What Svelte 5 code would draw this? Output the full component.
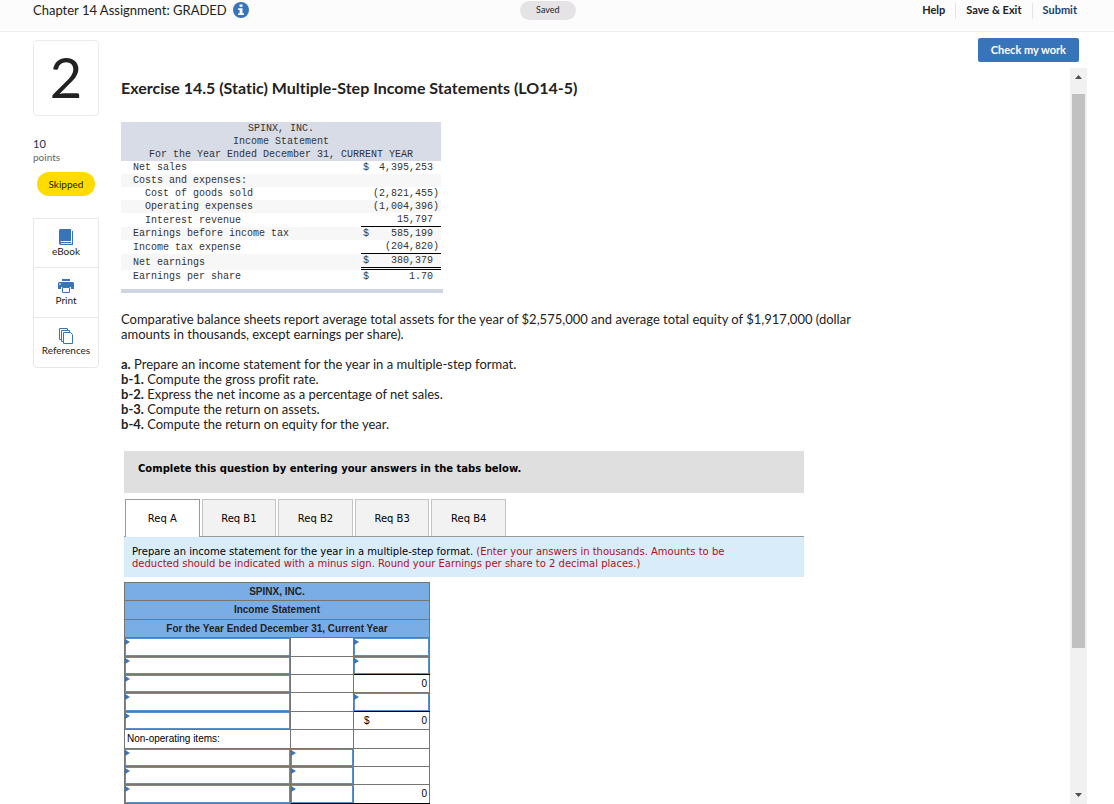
<script>
let tabs = ["Req A", "Req B1", "Req B2", "Req B3", "Req B4"]
let activeTab = $state(0)

let statement = [
    { label: "Net sales", sign: "$", amount: "4,395,253" },
    { label: "Costs and expenses:" },
    { label: "Cost of goods sold", indent: true, amount: "(2,821,455)" },
    { label: "Operating expenses", indent: true, amount: "(1,004,396)" },
    { label: "Interest revenue", indent: true, amount: "15,797", line: "single" },
    { label: "Earnings before income tax", sign: "$", amount: "585,199" },
    { label: "Income tax expense", amount: "(204,820)", line: "single" },
    { label: "Net earnings", sign: "$", amount: "380,379", line: "double" },
    { label: "Earnings per share", sign: "$", amount: "1.70" }
]

let requirements = [
    { id: "a.", text: "Prepare an income statement for the year in a multiple-step format." },
    { id: "b-1.", text: "Compute the gross profit rate." },
    { id: "b-2.", text: "Express the net income as a percentage of net sales." },
    { id: "b-3.", text: "Compute the return on assets." },
    { id: "b-4.", text: "Compute the return on equity for the year." }
]

// true = the cell can be filled in, a string = fixed text
let rows = [
    { name: true, mid: "", total: true },
    { name: true, mid: "", total: true, sum: true },
    { name: true, mid: "", total: "0" },
    { name: true, mid: "", total: true, sum: true },
    { name: true, mid: "", total: "0", sign: "$" },
    { name: "Non-operating items:", mid: "", total: "" },
    { name: true, mid: true, total: "" },
    { name: true, mid: true, total: "" },
    { name: true, mid: true, total: "0", sum: true }
]
</script>

{#snippet cell(value, label, extra, sign)}
    <td class={[extra, value === true && 'entry']}>
        {#if value === true}
            <input type="text" aria-label={label}>
        {:else if sign}
            <div class="money"><span>{sign}</span><span>{value}</span></div>
        {:else}
            {value}
        {/if}
    </td>
{/snippet}

<div class="page">
    <header>
        <div class="title">
            <span>Chapter 14 Assignment: GRADED</span>
            <button type="button" class="info" aria-label="Assignment information">
                <svg viewBox="0 0 16 16" width="16" height="16">
                    <circle cx="8" cy="8" r="8" fill="#3874ba" />
                    <path d="M6.5 2.5h3v2.3h-3zM5.2 6.2h4.3v5h1.4v1.8H5.2v-1.8h1.4V8H5.2z" fill="#fff" />
                </svg>
            </button>
        </div>
        <span class="saved">Saved</span>
        <nav>
            <a href="#help">Help</a>
            <a href="#exit">Save &amp; Exit</a>
            <a href="#submit" class="submit">Submit</a>
        </nav>
    </header>

    <div class="body">
        <aside>
            <div class="number">2</div>
            <div class="points"><span>10</span>points</div>
            <div class="skipped">Skipped</div>
            <div class="tools">
                <button type="button">
                    <svg viewBox="0 0 16 16" width="16" height="16">
                        <path d="M2.5 0H13v12H3.2v1H14V2h1v14H2.8C1.8 16 1 15.2 1 14V1.5C1 .7 1.7 0 2.5 0z" fill="#3874ba" />
                        <path d="M2.5 12.5H13M13.5 1v13.5H3" fill="none" stroke="#fff" stroke-width=".8" />
                    </svg>
                    eBook
                </button>
                <button type="button">
                    <svg viewBox="0 0 16 16" width="16" height="16">
                        <path d="M4 1h8v2H4zM1 4h14l1 1v6h-3V9H3v2H0V5z" fill="#3874ba" />
                        <path d="M4.5 9.5h7v5h-7z" fill="#fff" stroke="#3874ba" />
                        <path d="M1.3 5.3h1.4v1.4H1.3z" fill="#fff" />
                    </svg>
                    Print
                </button>
                <button type="button">
                    <svg viewBox="0 0 16 16" width="16" height="16" fill="#fff" stroke="#3874ba">
                        <path d="M1.5.5h8v11h-8z" />
                        <path d="M3.5 2.5h8v11h-8z" />
                        <path d="M5.5 4.5h7l2 2v9h-9z" />
                    </svg>
                    References
                </button>
            </div>
        </aside>

        <section>
            <button type="button" class="check">Check my work</button>
            <div class="scroller">
                <main>
                    <h1>Exercise 14.5 (Static) Multiple-Step Income Statements (LO14-5)</h1>

                    <div class="given">
                        <table>
                            <thead>
                                <tr><th colspan="3">SPINX, INC.</th></tr>
                                <tr><th colspan="3">Income Statement</th></tr>
                                <tr><th colspan="3">For the Year Ended December 31, CURRENT YEAR</th></tr>
                            </thead>
                            <tbody>
                                {#each statement as row}
                                <tr>
                                    <td class={['label', row.indent && 'indent']}>{row.label}</td>
                                    <td class={row.line}>{row.sign ?? ''}</td>
                                    <td class={['amount', row.line, row.amount?.endsWith(')') && 'negative']}>{row.amount ?? ''}</td>
                                </tr>
                                {/each}
                            </tbody>
                        </table>
                    </div>

                    <div class="question">
                        <p>Comparative balance sheets report average total assets for the year of $2,575,000 and average total equity of $1,917,000 (dollar amounts in thousands, except earnings per share).</p>
                        <ul>
                            {#each requirements as req}
                            <li><b>{req.id}</b> {req.text}</li>
                            {/each}
                        </ul>
                    </div>

                    <div class="answer">
                        <h2>Complete this question by entering your answers in the tabs below.</h2>
                        <div class="tabs">
                            <div class="tablist" role="tablist">
                                {#each tabs as tab, i}
                                <button type="button" role="tab" aria-selected={activeTab === i} class:active={activeTab === i} onclick={() => activeTab = i}>{tab}</button>
                                {/each}
                            </div>
                        </div>
                        <p class="hint">Prepare an income statement for the year in a multiple-step format. <em>(Enter your answers in thousands. Amounts to be deducted should be indicated with a minus sign. Round your Earnings per share to 2 decimal places.)</em></p>

                        <table class="sheet">
                            <colgroup><col class="wide"><col class="mid"><col></colgroup>
                            <tbody>
                                <tr><th colspan="3">SPINX, INC.</th></tr>
                                <tr><th colspan="3">Income Statement</th></tr>
                                <tr><th colspan="3">For the Year Ended December 31, Current Year</th></tr>
                                {#each rows as row, i}
                                <tr>
                                    {@render cell(row.name, `Item ${i + 1}`, '')}
                                    {@render cell(row.mid, `Amount ${i + 1}`, row.sum && row.mid && 'sum')}
                                    {@render cell(row.total, `Total ${i + 1}`, ['right', row.sum && 'sum'], row.sign)}
                                </tr>
                                {/each}
                            </tbody>
                        </table>
                    </div>
                </main>
                <div class="scrollbar">
                    <svg viewBox="0 0 7 4" width="7" height="4"><path d="M0 4 3.5 0 7 4z" fill="#505050" /></svg>
                    <div class="track"><div class="thumb"></div></div>
                    <svg viewBox="0 0 7 4" width="7" height="4"><path d="M0 0h7L3.5 4z" fill="#505050" /></svg>
                </div>
            </div>
        </section>
    </div>
</div>

<style>
:global(body) {
    background: #fff;
    color: #222;
    font-family: Lato, "Open Sans", sans-serif;
    font-size: 13px;
    font-variant-ligatures: none;
}

* {
    box-sizing: border-box;
}

button {
    font: inherit;
    color: inherit;
    cursor: pointer;
}

.page {
    display: flex;
    flex-direction: column;
    height: 100vh;
    overflow: hidden;
}

header {
    display: grid;
    grid-template-columns: 20fr auto 21fr;
    align-items: start;
    height: 32px;
    flex: none;
    padding: 0 27px 0 33px;
    background: #fcfcfc;
    border-bottom: 1px solid #efefef;
}

.title {
    display: flex;
    align-items: center;
    gap: 6px;
    height: 20px;
}

.info {
    display: flex;
    padding: 0;
    border: 0;
    background: none;
}

.saved {
    margin-top: 1px;
    padding: 0 16px 2px;
    border-radius: 10px;
    background: #e5e3e6;
    font-size: 9px;
    line-height: 17px;
}

nav {
    display: flex;
    justify-content: flex-end;
    padding-top: 3px;
    font-size: 11px;
    font-weight: bold;
    line-height: 14px;
}

nav a {
    padding: 0 10px 2px;
    color: #222;
    text-decoration: none;
}

nav a + a {
    border-left: 1px solid #e4e4e4;
}

nav .submit {
    color: #1b4173;
}

.body {
    display: flex;
    flex: 1;
    min-height: 0;
    padding: 0 27px 0 33px;
    gap: 22px;
}

aside {
    flex: none;
    width: 66px;
    padding-top: 8px;
}

.number {
    height: 76px;
    border: 1px solid #ebebeb;
    border-radius: 4px;
    font-size: 56px;
    line-height: 71px;
    text-align: center;
}

.points {
    display: flex;
    flex-direction: column;
    margin-top: 21px;
    color: #666;
    font-size: 10px;
    line-height: 12px;
}

.points span {
    color: #1b2f4d;
    font-size: 11px;
    line-height: 14px;
}

.skipped {
    width: 58px;
    margin: 9px auto 0;
    border-radius: 12px;
    background: #ffdb00;
    font-size: 10px;
    line-height: 24px;
    text-align: center;
}

.tools {
    display: flex;
    flex-direction: column;
    margin-top: 22px;
    border: 1px solid #e8e8e8;
    border-radius: 0 0 4px 4px;
}

.tools button {
    display: flex;
    flex-direction: column;
    align-items: center;
    height: 48px;
    padding: 10px 0 0;
    border: 0;
    background: none;
    font-size: 10px;
    line-height: 12px;
}

.tools button + button {
    height: 50px;
    border-top: 1px solid #e8e8e8;
}

section {
    display: flex;
    flex: 1;
    flex-direction: column;
    min-width: 0;
    padding-top: 6px;
}

.check {
    align-self: flex-end;
    height: 24px;
    margin-right: 8px;
    padding: 0 13px 2px;
    border: 0;
    border-radius: 2px;
    background: #3874ba;
    color: #fff;
    font-size: 11px;
    font-weight: bold;
    white-space: nowrap;
}

.scroller {
    display: flex;
    flex: 1;
    justify-content: space-between;
    min-height: 0;
    margin-top: 6px;
}

main {
    max-width: 750px;
    padding-top: 10px;
}

h1 {
    margin: 0 0 24px;
    font-size: 16px;
    line-height: 20px;
}

.scrollbar {
    display: flex;
    flex: none;
    flex-direction: column;
    align-items: center;
    gap: 7px;
    width: 17px;
    padding: 7px 0;
    background: #f1f1f1;
}

.track {
    flex: 1;
    width: 13px;
    padding-top: 8px;
}

.thumb {
    height: 80%;
    background: #c1c1c1;
}

.given {
    width: 322px;
    padding-bottom: 6px;
    border-bottom: 4px solid #d0d5e2;
}

.given table {
    width: 320px;
    border-spacing: 0;
    color: #333;
    font-family: "Liberation Mono", monospace;
    font-size: 10px;
    line-height: 13px;
}

.given th {
    padding: 0;
    background: #d8dce7;
    font-weight: normal;
}

.given td {
    padding: 0 2px;
}

.given tbody tr:nth-child(even) td {
    background: #f7f7f7;
}

.given .label {
    width: 241px;
    padding-left: 12px;
}

.given .indent {
    padding-left: 24px;
}

.given .amount {
    padding-right: 8px;
    text-align: right;
}

.given .negative {
    padding-right: 2px;
}

.single {
    border-bottom: 1px solid #000;
}

.double {
    border-bottom: 3px double #000;
}

.question {
    margin-top: 19px;
    line-height: 15px;
}

.question p {
    margin: 0 0 15px;
}

ul {
    margin: 0;
    padding: 0;
    list-style: none;
}

.answer {
    width: 680px;
    margin: 19px 0 0 3px;
    color: #000;
    font-family: "DejaVu Sans", sans-serif;
    font-size: 10px;
    line-height: 12px;
}

h2 {
    margin: 0 0 6px;
    padding: 12px 14px 18px;
    background: #dfdfdf;
    font-size: 10px;
}

.tabs {
    padding-left: 1px;
    border-bottom: 1px solid #999;
}

.tablist {
    display: grid;
    grid-template-columns: repeat(5, 1fr);
    gap: 2px;
    width: 381px;
}

.tabs button {
    height: 37px;
    padding: 1px 0 0;
    border: 1px solid #c4c4c4;
    border-bottom: 0;
    background: #f2f2f2;
}

.tabs .active {
    margin-bottom: -1px;
    height: 38px;
    border-color: #999;
    background: #fff;
}

.hint {
    margin: 0 0 5px;
    padding: 9px 40px 7px 8px;
    background: #d9ecfa;
}

em {
    color: #b0101c;
    font-style: normal;
}

.sheet {
    width: 306px;
    height: 222px;
    border-collapse: collapse;
    table-layout: fixed;
    font-family: "Liberation Sans", sans-serif;
    font-size: 10px;
}

.wide {
    width: 166px;
}

.mid {
    width: 63px;
}

.sheet th,
.sheet td {
    height: 18px;
    padding: 0 2px;
    border: 1px solid #757575;
}

.sheet th {
    background: #7aade6;
    color: #222;
}

.sheet .right {
    text-align: right;
}

.sheet .entry {
    position: relative;
    padding: 0;
}

.sheet .sum {
    border-bottom-color: #000;
}

.entry::before {
    content: '';
    position: absolute;
    top: 1px;
    left: 0;
    border: 3px solid transparent;
    border-right: 0;
    border-left: 5px solid #3874ba;
}

.sheet input {
    display: block;
    width: 100%;
    height: 100%;
    padding: 0 6px;
    border: 1px solid #5b8fca;
    border-radius: 0;
    outline: 0;
    background: none;
    font: inherit;
}

.money {
    display: flex;
    justify-content: space-between;
    padding-left: 8px;
}
</style>
